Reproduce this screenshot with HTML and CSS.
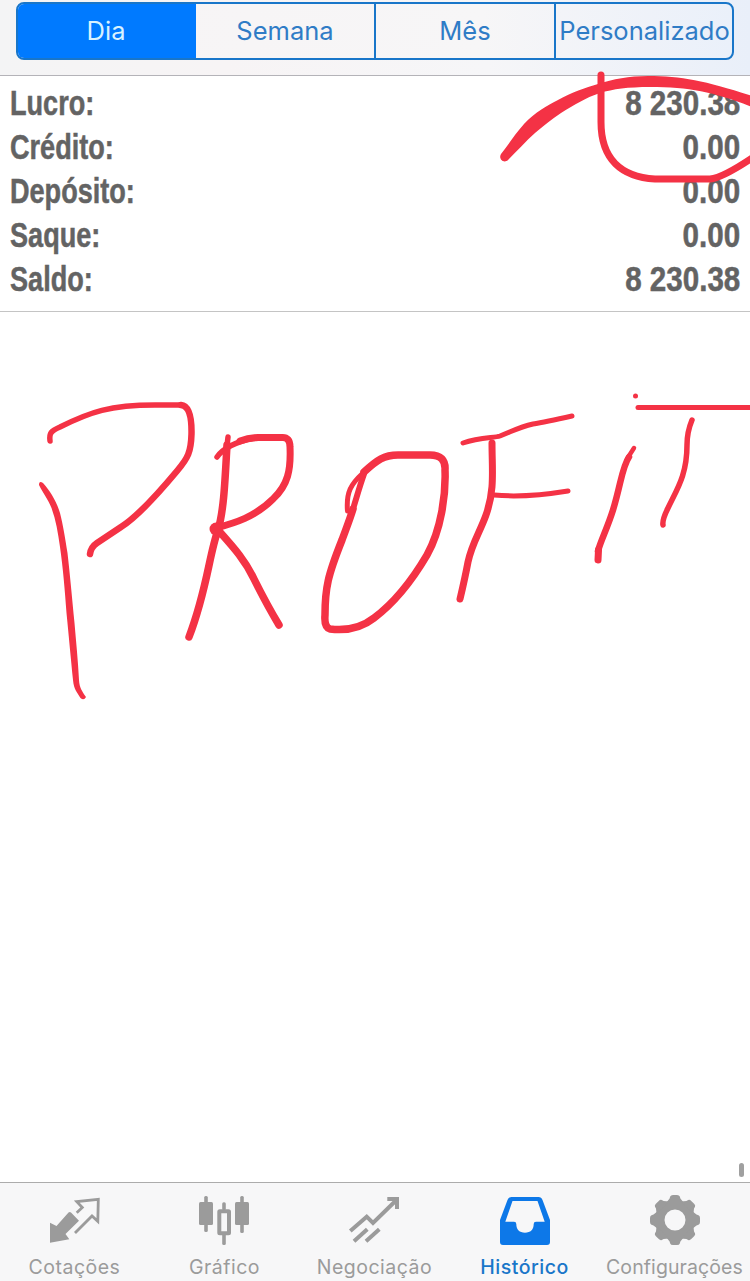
FILE: index.html
```html
<!doctype html>
<html lang="pt">
<head>
	<title>Histórico</title>
	<meta charset="utf-8">
	<link rel="stylesheet" href="styles.css">
</head>

<body>

	<div class="main">

		<div class="header">
			<div class="periods">
				<button class="period active">Dia</button>
				<button class="period">Semana</button>
				<button class="period">Mês</button>
				<button class="period last">Personalizado</button>
			</div>
		</div>

		<div class="summary">
			<div class="row"><span class="name">Lucro:</span><span class="value">8 230.38</span></div>
			<div class="row"><span class="name">Crédito:</span><span class="value">0.00</span></div>
			<div class="row"><span class="name">Depósito:</span><span class="value">0.00</span></div>
			<div class="row"><span class="name">Saque:</span><span class="value">0.00</span></div>
			<div class="row"><span class="name">Saldo:</span><span class="value">8 230.38</span></div>
		</div>

		<div class="history"><div class="scroll"></div></div>

		<div class="tabs">
			<div class="tab">
				<svg class="icon" viewBox="0 0 56 56">
					<path fill="currentColor" d="M3 30.7L9.5 34L21.5 20.5Q22.8 19.3 24 20.5L32 28.7L18.5 42L22.3 47.3L3 50.7Z"/>
					<path class="line" stroke-width="2.8" d="M29.7 20.7L35.3 15.5L29.8 9.6L51.3 7.4L50.8 29.3L45 24L28 41"/>
				</svg>
				<span class="label">Cotações</span>
			</div>
			<div class="tab">
				<svg class="icon" viewBox="0 0 56 56">
					<g fill="currentColor">
						<rect x="2" y="10" width="14" height="23" rx="1.5"/>
						<rect x="38" y="10" width="14" height="23" rx="1.5"/>
						<rect x="7.2" y="4" width="3.6" height="36" rx="1.5"/>
						<rect x="43.2" y="4" width="3.6" height="37" rx="1.5"/>
						<rect x="25.2" y="10.3" width="3.6" height="8" rx="1.5"/>
						<rect x="25.2" y="42" width="3.6" height="11" rx="1.5"/>
					</g>
					<rect class="line" stroke-width="4" x="22.3" y="19.3" width="9.7" height="22" rx="0.5"/>
				</svg>
				<span class="label">Gráfico</span>
			</div>
			<div class="tab">
				<svg class="icon" viewBox="0 0 56 56">
					<path class="line" stroke-width="4" d="M3.3 39L19.7 24.7L26 31L50 7.5M40.3 7H50V17M7 49.3L20.3 37.3M19 49.3L32.3 37.3"/>
				</svg>
				<span class="label">Negociação</span>
			</div>
			<div class="tab active">
				<svg class="icon" viewBox="0 0 56 56">
					<path fill="currentColor" fill-rule="evenodd" d="M14.5 5H41.5Q44.5 5 45.5 8L53 28V50Q53 53 50 53H6Q3 53 3 50V28L10.5 8Q11.5 5 14.5 5ZM15.5 9L8.3 29.7H17Q19.3 29.7 19.3 32C19.3 37.5 22.5 40.7 28 40.7S36.7 37.5 36.7 32Q36.7 29.7 39 29.7H47.7L40.5 9Z"/>
				</svg>
				<span class="label">Histórico</span>
			</div>
			<div class="tab">
				<svg class="icon" viewBox="0 0 56 56">
					<circle class="line" stroke-width="9" cx="28" cy="28" r="15"/>
					<g fill="currentColor">
						<path id="tooth" d="M19 11L22.6 6.5L23.2 4.5Q23.7 3 26 3H30Q32.3 3 32.8 4.5L33.4 6.5L37 11Z"/>
						<use href="#tooth" transform="rotate(45 28 28)"/>
						<use href="#tooth" transform="rotate(90 28 28)"/>
						<use href="#tooth" transform="rotate(135 28 28)"/>
						<use href="#tooth" transform="rotate(180 28 28)"/>
						<use href="#tooth" transform="rotate(225 28 28)"/>
						<use href="#tooth" transform="rotate(270 28 28)"/>
						<use href="#tooth" transform="rotate(315 28 28)"/>
					</g>
				</svg>
				<span class="label config">Configurações</span>
			</div>
		</div>

		<!-- freehand marks over the page -->
		<svg class="marks" viewBox="0 0 750 1281">
			<!-- ring round the profit -->
			<path class="fill" d="M501 154C509 144 515 134 524 124C535 112 548 105 558 100C572 92 585 88 598 84C613 79 629 76 648 76C682 76 706 81 752 96V107C714 92 690 87 650 87C628 87 613 89 600 93C585 98 574 105 561 113C551 120 543 126 535 133C526 141 517 151 508 160C504 164 498 159 501 154Z"/>
			<path stroke-width="7" d="M601 75V122C601 160 622 177 655 179H710Q722 178 752 158"/>
			<!-- P -->
			<path stroke-width="5.5" d="M50 441C49 433 51 431 60 427C90 412 110 405 155 405H181"/>
			<path stroke-width="6.5" d="M181 405Q192 406 191.5 434C191 452 188 458 177 471C157 495 137 517 121 527L97 543Q91 547 90 554"/>
			<path class="fill" d="M39 485C43 493 48 499 51.5 508C56 520 58 533 60 547C63 568 65 592 66.500 613C69 638 71 660 73 680C74 690 77 692 80.500 698Q84 701 86 697C82 691 79.500 688 79 680C78 660 76 641 74.500 623C72 597 70 575 67.500 553C65 537 63 525 60 513C56 500 50 491 43 483Q39 480 39 485Z"/>
			<!-- R -->
			<path stroke-width="5.5" d="M228 437L226 455M217 457Q226 444 254 438"/>
			<path stroke-width="7.5" d="M227 445C225 480 224 510 218 530C209 555 207 590 189 637M218 530C234 548 245 560 254 579Q267 605 279 625"/>
			<path stroke-width="7" d="M240 441Q248 438 258 437.5H282Q290 437 290 447C291 470 288 485 273 499C255 517 235 523 216 528"/>
			<circle class="fill" cx="216" cy="529" r="6.5"/>
			<!-- O -->
			<path stroke-width="5" d="M347.500 511C346 492 351 484 363 473"/>
			<path stroke-width="7.5" d="M364 472C377 460 384 455 398 455H430Q446 455 445 470C446 495 441 530 427 555C410 584 390 606 374 618C360 629 346 631 330 629Q324 627 325 615C325 588 328 575 342 540C346 529 350 519 353 509"/>
			<path stroke-width="6" d="M352 512C356 500 359 488 364 474"/>
			<!-- F -->
			<path stroke-width="5" d="M463 443C480 437 494 438 500 436C515 430 520 427 533 424Q545 422 572 416M494 495Q525 498 568 491"/>
			<path stroke-width="7" d="M492 443C492 470 495 490 486 515C480 532 472 543 468 562Q465 578 460 599"/>
			<!-- I -->
			<path stroke-width="4.5" d="M634 448L627 459"/>
			<path stroke-width="6.500" d="M629 457C622 467 621 484 613 510C607 529 601 540 598 551"/>
			<path stroke-width="7" d="M598.500 550L598 560"/>
			<circle class="fill" cx="635.5" cy="396" r="2.5"/>
			<!-- T -->
			<path stroke-width="5" d="M638 407.5H752"/>
			<path stroke-width="5.5" d="M692 420Q687 432 687 445C687 475 677 489 668 508Q662 520 663 525"/>
		</svg>

	</div><!-- /main -->

</body>
</html>
```

FILE: styles.css
```css
body{
	margin: 0;
	padding: 0;
	background: #fff;
}
.main{
	position: relative;
	display: flex;
	flex-direction: column;
	width: 750px;
	height: 1281px;
	overflow: hidden;
}
.header{
	box-sizing: border-box;
	height: 76px;
	padding: 2px 16px 0;
	border-bottom: 1px solid #b4b3b8;
	background: linear-gradient(90deg, #f4f4f5 0, #f7f4f5 30%, #f6f6f8 65%, #e9eff9 100%);
}
.periods{
	box-sizing: border-box;
	display: grid;
	grid-template-columns: 178px 180px 180px 1fr;
	height: 58px;
	border: 2px solid #1976c9;
	border-radius: 8px;
	overflow: hidden;
	background: linear-gradient(90deg, #f7f4f5 0, #f7f6f7 65%, #eaf0fa 100%);
}
.period{
	padding: 0 0 1px;
	border: 0;
	border-right: 2px solid #1976c9;
	background: transparent;
	color: #2f7cc6;
	font-family: Inter, "Liberation Sans", sans-serif;
	font-size: 25.5px;
	letter-spacing: 0;
	white-space: nowrap;
}
.period.last{
	padding-left: 1px;
	border-right: 0;
}
.period.active{
	background: #007aff;
	border-color: #007aff;
	color: #d8f2ff;
}
.summary{
	box-sizing: border-box;
	height: 236px;
	padding: 5px 10px 0;
	border-bottom: 1px solid #c4c4c4;
}
.row{
	display: flex;
	justify-content: space-between;
	height: 44px;
	line-height: 44px;
	color: #636363;
	font-family: "Liberation Sans", Arial, sans-serif;
	font-size: 34.5px;
	font-weight: bold;
	-webkit-text-stroke: 0.5px #636363;
}
.name{
	transform: scaleX(0.785);
	transform-origin: left;
}
.value{
	transform: scaleX(0.857);
	transform-origin: right;
}
.history{
	flex: 1;
	display: flex;
	justify-content: flex-end;
	align-items: flex-end;
	padding: 0 6px 5px 0;
}
.scroll{
	width: 5px;
	height: 14px;
	border-radius: 2.5px;
	background: #a0a0a0;
}
.tabs{
	box-sizing: border-box;
	display: grid;
	grid-template-columns: repeat(5, 150px);
	height: 99px;
	border-top: 1px solid #acacac;
	background: #f7f7f8;
}
.tab{
	display: flex;
	flex-direction: column;
	align-items: center;
	padding-top: 9px;
	color: #9b9b9b;
}
.tab.active{
	color: #0d78e8;
}
.icon{
	width: 56px;
	height: 56px;
}
.line{
	fill: none;
	stroke: currentColor;
}
.label{
	margin-top: 6px;
	padding-right: 1px;
	font-family: Inter, "Liberation Sans", sans-serif;
	font-size: 19.5px;
	line-height: 26px;
	letter-spacing: 0.5px;
	white-space: nowrap;
}
.label.config{
	letter-spacing: 0.1px;
}
.tab.active .label{
	color: #1976c9;
	font-weight: 500;
}
.marks{
	position: absolute;
	top: 0;
	left: 0;
	width: 750px;
	height: 1281px;
	fill: none;
	stroke: #f43245;
	stroke-linecap: round;
	stroke-linejoin: round;
	pointer-events: none;
}
.marks .fill{
	fill: #f43245;
	stroke: none;
}
```
